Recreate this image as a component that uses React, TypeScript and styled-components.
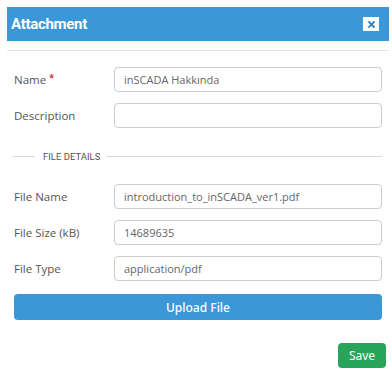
import React from "react";
import styled, { createGlobalStyle } from "styled-components";

const Global = createGlobalStyle`
  body {
    margin: 0;
    background: #fff;
    font-family: "Open Sans", "Noto Sans", sans-serif;
  }
`;

export default function App() {
  return (
    <Modal>
      <Global />
      <HeaderArea>
        <Header>
          <Title>Attachment</Title>
          <CloseButton aria-label="close">
            <svg width="7" height="7" viewBox="0 0 7 7">
              <path d="M1 1 L6 6 M6 1 L1 6" stroke="#3a7fb8" strokeWidth="1.8" strokeLinecap="square" />
            </svg>
          </CloseButton>
        </Header>
      </HeaderArea>

      <Body>
        <Row>
          <Label>
            Name <Required>*</Required>
          </Label>
          <Input defaultValue="inSCADA Hakkında" />
        </Row>
        <Row>
          <Label>Description</Label>
          <Input defaultValue="" />
        </Row>

        <Divider>
          <DividerText>FILE DETAILS</DividerText>
        </Divider>

        <Row>
          <Label>File Name</Label>
          <Input defaultValue="introduction_to_inSCADA_ver1.pdf" />
        </Row>
        <Row>
          <Label>File Size (kB)</Label>
          <Input defaultValue="14689635" />
        </Row>
        <Row>
          <Label>File Type</Label>
          <Input defaultValue="application/pdf" />
        </Row>

        <UploadButton>Upload File</UploadButton>
      </Body>

      <Footer>
        <SaveButton>Save</SaveButton>
      </Footer>
    </Modal>
  );
}

const Modal = styled.div`
  width: 392px;
  height: 376px;
  padding: 7px 3px 0 7px;
  box-sizing: border-box;
`;

const HeaderArea = styled.div`
  padding-bottom: 9px;
  border-bottom: 1px solid #e3e3e3;
`;

const Header = styled.div`
  height: 34px;
  background: #3b97d8;
  display: flex;
  align-items: center;
  justify-content: space-between;
  padding: 0 10px 0 4px;
`;

const Title = styled.h1`
  margin: 0;
  font-family: Roboto, "Noto Sans", sans-serif;
  font-weight: 700;
  font-size: 15px;
  color: #fff;
  letter-spacing: -0.3px;
`;

const CloseButton = styled.button`
  width: 16px;
  height: 14px;
  padding: 0;
  border: none;
  background: #fff;
  display: flex;
  align-items: center;
  justify-content: center;
`;

const Body = styled.div`
  padding: 16px 7px 0 7px;
  display: flex;
  flex-direction: column;
  gap: 11px;
`;

const Row = styled.div`
  display: flex;
  align-items: center;
  height: 25px;
`;

const Label = styled.label`
  width: 100px;
  flex-shrink: 0;
  font-size: 11.5px;
  color: #555;
`;

const Required = styled.span`
  color: #d0312d;
  font-size: 9px;
  font-weight: 700;
  vertical-align: top;
  position: relative;
  top: -1px;
`;

const Input = styled.input`
  flex: 1;
  height: 25px;
  box-sizing: border-box;
  border: 1px solid #ccc;
  border-radius: 4px;
  padding: 0 9px;
  font-family: "Open Sans", "Noto Sans", sans-serif;
  font-size: 11px;
  color: #666;
  outline: none;
`;

const Divider = styled.div`
  display: flex;
  align-items: center;
  margin: 6px 0 6px -2px;
  height: 22px;
  &::before,
  &::after {
    content: "";
    height: 1px;
    background: #d9d9d9;
  }
  &::before {
    width: 23px;
  }
  &::after {
    flex: 1;
  }
`;

const DividerText = styled.span`
  font-family: Roboto, "Noto Sans", sans-serif;
  font-size: 9.5px;
  color: #555;
  padding: 0 7px 0 8px;
`;

const UploadButton = styled.button`
  margin-top: 2px;
  height: 26px;
  border: none;
  border-radius: 4px;
  background: #3b97d8;
  color: #fff;
  font-family: "Noto Sans", "Open Sans", sans-serif;
  font-size: 12px;
  font-weight: 500;
`;

const Footer = styled.div`
  display: flex;
  justify-content: flex-end;
  padding: 23px 3px 0 0;
`;

const SaveButton = styled.button`
  width: 48px;
  height: 25px;
  border: none;
  border-radius: 4px;
  background: #27a55b;
  color: #fff;
  font-family: "Noto Sans", "Open Sans", sans-serif;
  font-size: 12px;
`;
